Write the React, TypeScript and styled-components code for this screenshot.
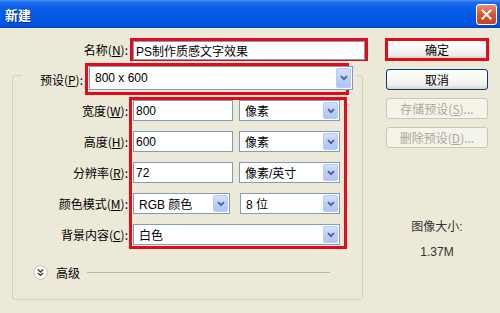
import React from 'react';
import styled, { createGlobalStyle } from 'styled-components';

const Global = createGlobalStyle`
  html, body { margin: 0; padding: 0; background: #ECE9D8; }
  body {
    font-family: "Liberation Sans", "Noto Sans CJK SC", sans-serif;
    font-size: 12px;
    color: #000;
  }
  * { box-sizing: border-box; }
`;

const Window = styled.div`
  width: 500px;
  height: 313px;
  background: #ECE9D8;
  display: flex;
  flex-direction: column;
  overflow: hidden;
`;

const TitleBar = styled.div`
  height: 28px;
  flex: none;
  display: flex;
  align-items: center;
  justify-content: space-between;
  padding: 0 3px 0 5px;
  background: linear-gradient(
    to bottom,
    #4A94F6 0%,
    #1D6FEE 8%,
    #0A5DE6 30%,
    #0058E3 60%,
    #0055DE 88%,
    #0044C0 100%
  );
`;

const Title = styled.span`
  color: #fff;
  font-family: "Noto Sans CJK SC", sans-serif;
  font-weight: 700;
  font-size: 13px;
  text-shadow: 1px 1px 0 #0A2A8C;
`;

const CloseButton = styled.div`
  width: 21px;
  height: 21px;
  border: 1px solid #fff;
  border-radius: 3px;
  background: linear-gradient(to bottom, #E9906F 0%, #D9583A 45%, #C8421F 100%);
  display: flex;
  align-items: center;
  justify-content: center;
`;

const Body = styled.div`
  flex: 1;
  display: flex;
  padding: 10px 0 0 12px;
`;

const LeftPane = styled.div`
  width: 351px;
  flex: none;
  display: flex;
  flex-direction: column;
`;

const NameRow = styled.div`
  display: flex;
  align-items: center;
  height: 23px;
`;

const Label = styled.div<{ $w: number; $pr?: number }>`
  width: ${p => p.$w}px;
  height: 21px;
  flex: none;
  text-align: right;
  padding-right: ${p => p.$pr ?? 0}px;
  white-space: nowrap;
  line-height: 21px;
  overflow: visible;
  font-family: "Noto Sans CJK SC", sans-serif;
  font-size: 12px;
  u { text-decoration: underline; text-underline-offset: 1px; }
`;

const Annot = styled.div<{ $w: number; $h: number; $ml?: number }>`
  width: ${p => p.$w}px;
  height: ${p => p.$h}px;
  flex: none;
  margin-left: ${p => p.$ml ?? 0}px;
  border: 3px solid #E30B1A;
  display: flex;
  flex-direction: column;
  overflow: visible;
`;

const TextField = styled.div<{ $w?: number }>`
  width: ${p => (p.$w ? `${p.$w}px` : 'auto')};
  flex: ${p => (p.$w ? 'none' : '1')};
  height: 21px;
  background: #fff;
  border: 1px solid #7F9DB9;
  padding-left: 2px;
  display: flex;
  align-items: center;
  white-space: nowrap;
  font-family: "Liberation Sans", "Noto Sans CJK SC", sans-serif;
  font-size: 12px;
`;

const SelectBox = styled.div<{ $w: number; $h?: number; $ml?: number }>`
  width: ${p => p.$w}px;
  height: ${p => p.$h ?? 21}px;
  flex: none;
  margin-left: ${p => p.$ml ?? 0}px;
  background: #fff;
  border: 1px solid #7F9DB9;
  padding: 1px 1px 1px 5px;
  display: flex;
  align-items: center;
  white-space: nowrap;
  font-family: "Liberation Sans", "Noto Sans CJK SC", sans-serif;
  font-size: 12px;
`;

const SelectText = styled.span`
  flex: 1;
`;

const DropButton = styled.span`
  width: 15px;
  align-self: stretch;
  flex: none;
  border-radius: 2px;
  background: linear-gradient(to bottom, #D3E0FD 0%, #BCD0FA 50%, #AFC5F6 100%);
  border: 1px solid #B7CAF3;
  display: flex;
  align-items: center;
  justify-content: center;
`;

const Chevron = () => (
  <svg width="8" height="6" viewBox="0 0 8 6">
    <path d="M1 1.2 L4 4.2 L7 1.2" fill="none" stroke="#4D6185" strokeWidth="1.8" />
  </svg>
);

const Select: React.FC<{ w: number; h?: number; ml?: number; children?: React.ReactNode }> = ({ w, h, ml, children }) => (
  <SelectBox $w={w} $h={h} $ml={ml}>
    <SelectText>{children}</SelectText>
    <DropButton><Chevron /></DropButton>
  </SelectBox>
);

const GroupBox = styled.div`
  margin-top: 14px;
  height: 225px;
  border: 1px solid #D0D0BF;
  border-radius: 3px;
  display: flex;
  flex-direction: column;
`;

const Legend = styled.div`
  margin: -13px 0 0 9px;
  align-self: flex-start;
  display: flex;
  align-items: center;
  background: #ECE9D8;
  padding-right: 8px;
`;

const FieldsArea = styled.div`
  margin-top: 2px;
  display: flex;
  align-items: flex-start;
`;

const LabelColumn = styled.div`
  width: 116px;
  flex: none;
  padding-top: 3px;
  display: flex;
  flex-direction: column;
  gap: 10px;
`;

const ControlGrid = styled.div`
  display: flex;
  flex-direction: column;
  gap: 10px;
  padding-left: 1px;
`;

const ControlRow = styled.div`
  display: flex;
  align-items: center;
  height: 21px;
`;

const AdvancedRow = styled.div`
  margin-top: 15px;
  height: 16px;
  display: flex;
  align-items: center;
  padding-left: 20px;
  padding-right: 32px;
`;

const AdvancedText = styled.span`
  margin-left: 8px;
  font-family: "Noto Sans CJK SC", sans-serif;
  font-size: 12px;
`;

const Rule = styled.div`
  flex: 1;
  margin-left: 7px;
  border-top: 1px solid #B9B7AC;
`;

const RightPane = styled.div`
  width: 104px;
  margin-left: 22px;
  flex: none;
  display: flex;
  flex-direction: column;
  align-items: center;
`;

const Button = styled.div<{ $disabled?: boolean; $bare?: boolean }>`
  width: ${p => (p.$bare ? '100%' : '102px')};
  height: ${p => (p.$bare ? '100%' : '21px')};
  margin-top: ${p => (p.$bare ? 0 : 8)}px;
  border: ${p => (p.$bare ? 'none' : `1px solid ${p.$disabled ? '#C9C7BA' : '#003C74'}`)};
  border-radius: 3px;
  background: ${p =>
    p.$disabled
      ? '#F5F4EA'
      : 'linear-gradient(to bottom, #FFFFFF 0%, #F7F7F3 50%, #ECEBE4 85%, #D6D0C5 100%)'};
  color: ${p => (p.$disabled ? '#ACA899' : '#000')};
  display: flex;
  align-items: center;
  justify-content: center;
  white-space: nowrap;
  font-family: "Noto Sans CJK SC", sans-serif;
  font-size: 12px;
`;

const SizeInfo = styled.div<{ $mt: number }>`
  margin-top: ${p => p.$mt}px;
  height: 14px;
  line-height: 14px;
  color: #333;
  font-family: "Liberation Sans", "Noto Sans CJK SC", sans-serif;
  font-size: 12px;
`;

const CloseX = () => (
  <svg width="11" height="11" viewBox="0 0 11 11">
    <path d="M1.5 1.5 L9.5 9.5 M9.5 1.5 L1.5 9.5" stroke="#fff" strokeWidth="2" strokeLinecap="square" />
  </svg>
);

const ExpandIcon = () => (
  <svg width="15" height="15" viewBox="0 0 15 15">
    <circle cx="7.5" cy="7.5" r="6.8" fill="#fff" stroke="#C4C2B8" strokeWidth="1" />
    <path d="M4.8 4.6 L7.5 7 L10.2 4.6 M4.8 8 L7.5 10.4 L10.2 8" fill="none" stroke="#3A3A3A" strokeWidth="1.4" />
  </svg>
);

const fieldLabels: [string, string][] = [
  ['宽度(', 'W'],
  ['高度(', 'H'],
  ['分辨率(', 'R'],
  ['颜色模式(', 'M'],
  ['背景内容(', 'C'],
];

export default function App() {
  return (
    <Window>
      <Global />
      <TitleBar>
        <Title>新建</Title>
        <CloseButton><CloseX /></CloseButton>
      </TitleBar>
      <Body>
        <LeftPane>
          <NameRow>
            <Label $w={116}>名称(<u>N</u>):</Label>
            <Annot $w={238} $h={23} $ml={2}>
              <TextField>PS制作质感文字效果</TextField>
            </Annot>
          </NameRow>
          <GroupBox>
            <Legend>
              <Label $w={61}>预设(<u>P</u>):</Label>
              <Annot $w={264} $h={32} $ml={2}>
                <Select w={264} h={24} ml={1}>800 x 600</Select>
              </Annot>
            </Legend>
            <FieldsArea>
              <LabelColumn>
                {fieldLabels.map(([t, k]) => (
                  <Label key={k} $w={116} $pr={1}>
                    {t}<u>{k}</u>):
                  </Label>
                ))}
              </LabelColumn>
              <Annot $w={218} $h={152}>
                <ControlGrid>
                  <ControlRow>
                    <TextField $w={100}>800</TextField>
                    <Select w={101} ml={6}>像素</Select>
                  </ControlRow>
                  <ControlRow>
                    <TextField $w={100}>600</TextField>
                    <Select w={101} ml={6}>像素</Select>
                  </ControlRow>
                  <ControlRow>
                    <TextField $w={100}>72</TextField>
                    <Select w={101} ml={6}>像素/英寸</Select>
                  </ControlRow>
                  <ControlRow>
                    <Select w={97}>RGB 颜色</Select>
                    <Select w={100} ml={10}>8 位</Select>
                  </ControlRow>
                  <ControlRow>
                    <Select w={207}>白色</Select>
                  </ControlRow>
                </ControlGrid>
              </Annot>
            </FieldsArea>
            <AdvancedRow>
              <ExpandIcon />
              <AdvancedText>高级</AdvancedText>
              <Rule />
            </AdvancedRow>
          </GroupBox>
        </LeftPane>
        <RightPane>
          <Annot $w={104} $h={23}>
            <Button $bare>确定</Button>
          </Annot>
          <Button>取消</Button>
          <Button $disabled>存储预设(<u>S</u>)...</Button>
          <Button $disabled>删除预设(<u>D</u>)...</Button>
          <SizeInfo $mt={72}>图像大小:</SizeInfo>
          <SizeInfo $mt={11}>1.37M</SizeInfo>
        </RightPane>
      </Body>
    </Window>
  );
}
